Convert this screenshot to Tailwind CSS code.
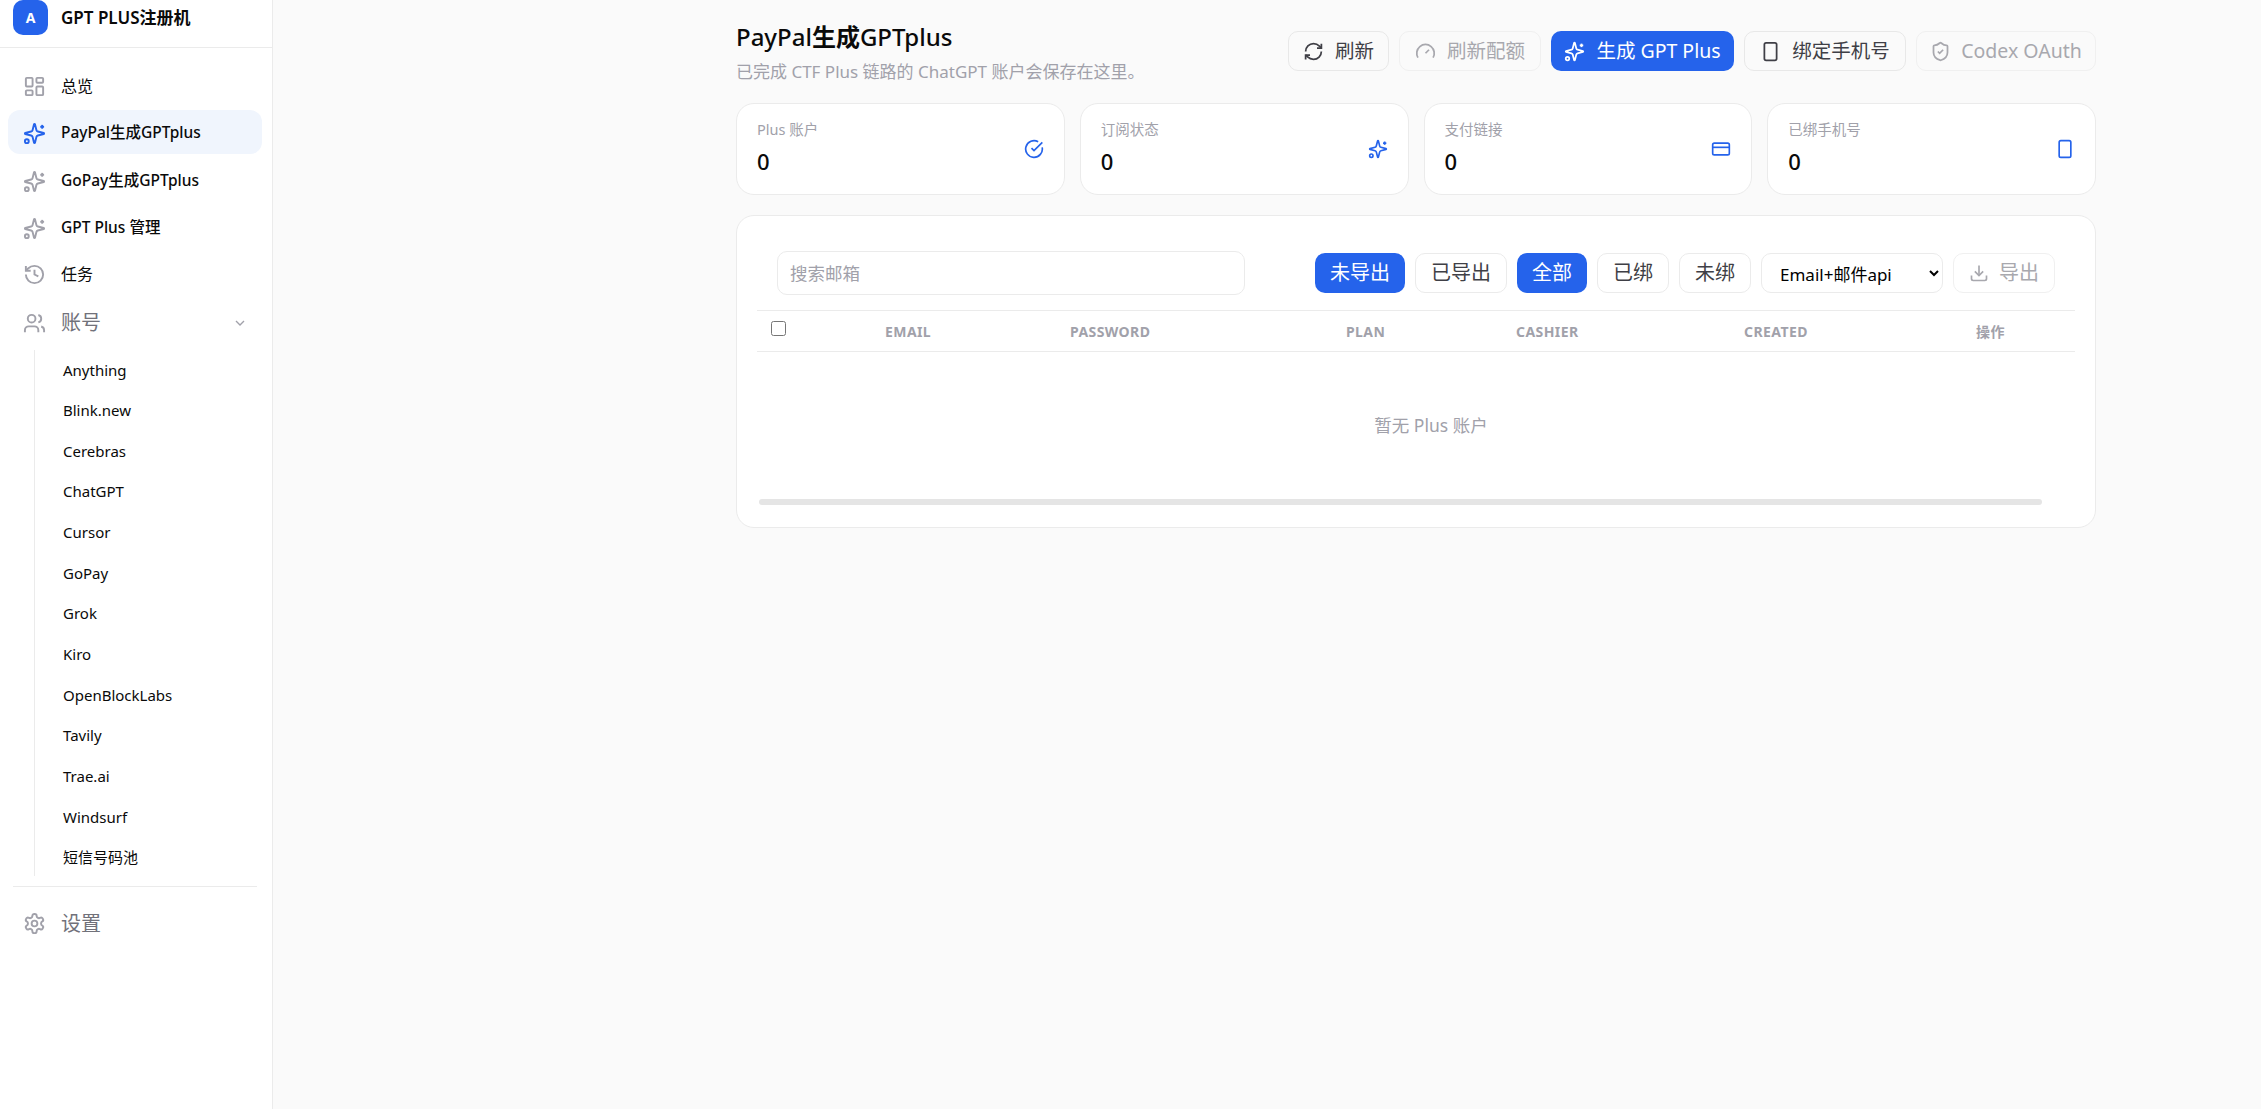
<!DOCTYPE html>
<html lang="zh-CN">
<head>
    <meta charset="UTF-8">
    <title>GPT PLUS注册机</title>
    <script src="https://cdn.jsdelivr.net/npm/@tailwindcss/browser@4"></script>
</head>
<body class="h-[1109px] overflow-hidden bg-[#fafafa] text-[#0a0a0a] font-['Noto_Sans','Noto_Sans_CJK_SC',sans-serif]">
    <svg class="hidden">
        <defs>
            <symbol id="i-dashboard" viewBox="0 0 24 24"><rect width="7" height="9" x="3" y="3" rx="1"/><rect width="7" height="5" x="14" y="3" rx="1"/><rect width="7" height="9" x="14" y="12" rx="1"/><rect width="7" height="5" x="3" y="16" rx="1"/></symbol>
            <symbol id="i-sparkles" viewBox="0 0 24 24"><path d="M9.937 15.5A2 2 0 0 0 8.5 14.063l-6.135-1.582a.5.5 0 0 1 0-.962L8.5 9.936A2 2 0 0 0 9.937 8.5l1.582-6.135a.5.5 0 0 1 .963 0L14.063 8.5A2 2 0 0 0 15.5 9.937l6.135 1.581a.5.5 0 0 1 0 .964L15.5 14.063a2 2 0 0 0-1.437 1.437l-1.582 6.135a.5.5 0 0 1-.963 0z"/><path d="M20 3v4"/><path d="M22 5h-4"/><circle cx="4" cy="20" r="2"/></symbol>
            <symbol id="i-history" viewBox="0 0 24 24"><path d="M3 12a9 9 0 1 0 9-9 9.75 9.75 0 0 0-6.74 2.74L3 8"/><path d="M3 3v5h5"/><path d="M12 7v5l4 2"/></symbol>
            <symbol id="i-users" viewBox="0 0 24 24"><path d="M16 21v-2a4 4 0 0 0-4-4H6a4 4 0 0 0-4 4v2"/><circle cx="9" cy="7" r="4"/><path d="M22 21v-2a4 4 0 0 0-3-3.87"/><path d="M16 3.13a4 4 0 0 1 0 7.75"/></symbol>
            <symbol id="i-chevron" viewBox="0 0 24 24"><path d="m6 9 6 6 6-6"/></symbol>
            <symbol id="i-settings" viewBox="0 0 24 24"><path d="M12.22 2h-.44a2 2 0 0 0-2 2v.18a2 2 0 0 1-1 1.73l-.43.25a2 2 0 0 1-2 0l-.15-.08a2 2 0 0 0-2.73.73l-.22.38a2 2 0 0 0 .73 2.73l.15.1a2 2 0 0 1 1 1.72v.51a2 2 0 0 1-1 1.74l-.15.09a2 2 0 0 0-.73 2.73l.22.38a2 2 0 0 0 2.73.73l.15-.08a2 2 0 0 1 2 0l.43.25a2 2 0 0 1 1 1.73V20a2 2 0 0 0 2 2h.44a2 2 0 0 0 2-2v-.18a2 2 0 0 1 1-1.73l.43-.25a2 2 0 0 1 2 0l.15.08a2 2 0 0 0 2.73-.73l.22-.39a2 2 0 0 0-.73-2.73l-.15-.08a2 2 0 0 1-1-1.74v-.5a2 2 0 0 1 1-1.74l.15-.09a2 2 0 0 0 .73-2.73l-.22-.38a2 2 0 0 0-2.73-.73l-.15.08a2 2 0 0 1-2 0l-.43-.25a2 2 0 0 1-1-1.73V4a2 2 0 0 0-2-2z"/><circle cx="12" cy="12" r="3"/></symbol>
            <symbol id="i-refresh" viewBox="0 0 24 24"><path d="M3 12a9 9 0 0 1 9-9 9.75 9.75 0 0 1 6.74 2.74L21 8"/><path d="M21 3v5h-5"/><path d="M21 12a9 9 0 0 1-9 9 9.75 9.75 0 0 1-6.74-2.74L3 16"/><path d="M8 16H3v5"/></symbol>
            <symbol id="i-gauge" viewBox="0 0 24 24"><path d="m12 14 4-4"/><path d="M3.34 19a10 10 0 1 1 17.32 0"/></symbol>
            <symbol id="i-phone" viewBox="0 0 24 24"><rect width="14" height="20" x="5" y="2" rx="2" ry="2"/><path d="M12 18h.01"/></symbol>
            <symbol id="i-shield" viewBox="0 0 24 24"><path d="M20 13c0 5-3.5 7.5-7.66 8.95a1 1 0 0 1-.67-.01C7.5 20.5 4 18 4 13V6a1 1 0 0 1 1-1c2 0 4.5-1.2 6.24-2.72a1.17 1.17 0 0 1 1.52 0C14.51 3.81 17 5 19 5a1 1 0 0 1 1 1z"/><path d="m9 12 2 2 4-4"/></symbol>
            <symbol id="i-check" viewBox="0 0 24 24"><path d="M21.801 10A10 10 0 1 1 17 3.335"/><path d="m9 11 3 3L22 4"/></symbol>
            <symbol id="i-card" viewBox="0 0 24 24"><rect width="20" height="14" x="2" y="5" rx="2"/><line x1="2" x2="22" y1="10" y2="10"/></symbol>
            <symbol id="i-download" viewBox="0 0 24 24"><path d="M21 15v4a2 2 0 0 1-2 2H5a2 2 0 0 1-2-2v-4"/><polyline points="7 10 12 15 17 10"/><line x1="12" x2="12" y1="15" y2="3"/></symbol>
        </defs>
    </svg>

    <div class="flex h-full">
        <!-- sidebar -->
        <aside class="w-[273px] shrink-0 h-full bg-white border-r border-[#ebebeb]">
            <div class="h-[48px] border-b border-[#ebebeb] pl-[13px] flex items-start gap-[13px]">
                <div class="w-[35px] h-[35px] rounded-[10px] bg-[#2563eb] text-white text-[14px] font-bold flex items-center justify-center">A</div>
                <div class="h-[35px] flex items-center text-[17px] font-semibold">GPT PLUS注册机</div>
            </div>
            <nav class="pt-[15px] pl-[8px] pr-[10px] text-[15.5px] font-medium">
                <a class="h-[47px] pl-[15px] pb-[1px] flex items-center gap-[15px] text-[16px] font-normal"><svg class="w-[23px] h-[23px] text-[#a1a1aa] fill-none stroke-current stroke-2"><use href="#i-dashboard"/></svg>总览</a>
                <a class="h-[44px] mb-[2.5px] pt-[2px] rounded-[12px] bg-[#f0f5fd] pl-[15px] flex items-center gap-[15px]"><svg class="w-[23px] h-[23px] text-[#2563eb] fill-none stroke-current stroke-2"><use href="#i-sparkles"/></svg>PayPal生成GPTplus</a>
                <a class="h-[47px] pt-[2px] pl-[15px] flex items-center gap-[15px]"><svg class="w-[23px] h-[23px] text-[#a1a1aa] fill-none stroke-current stroke-2"><use href="#i-sparkles"/></svg>GoPay生成GPTplus</a>
                <a class="h-[47px] pt-[2px] pl-[15px] flex items-center gap-[15px]"><svg class="w-[23px] h-[23px] text-[#a1a1aa] fill-none stroke-current stroke-2"><use href="#i-sparkles"/></svg>GPT Plus 管理</a>
                <a class="h-[47px] pl-[15px] flex items-center gap-[15px] text-[16px] font-normal"><svg class="w-[23px] h-[23px] text-[#a1a1aa] fill-none stroke-current stroke-2"><use href="#i-history"/></svg>任务</a>
                <a class="h-[49px] pt-[2px] pl-[15px] pr-[14px] flex items-center gap-[15px] text-[20px] font-normal text-[#71717a]"><svg class="w-[23px] h-[23px] text-[#a1a1aa] fill-none stroke-current stroke-2"><use href="#i-users"/></svg>账号<svg class="ml-auto w-[16px] h-[16px] text-[#a1a1aa] fill-none stroke-current stroke-2"><use href="#i-chevron"/></svg></a>
            </nav>
            <ul class="ml-[34px] mt-[3px] h-[526px] border-l border-[#ebebeb] pl-[28px] text-[15px]">
                <li class="h-[40.65px] flex items-center">Anything</li>
                <li class="h-[40.65px] flex items-center">Blink.new</li>
                <li class="h-[40.65px] flex items-center">Cerebras</li>
                <li class="h-[40.65px] flex items-center">ChatGPT</li>
                <li class="h-[40.65px] flex items-center">Cursor</li>
                <li class="h-[40.65px] flex items-center">GoPay</li>
                <li class="h-[40.65px] flex items-center">Grok</li>
                <li class="h-[40.65px] flex items-center">Kiro</li>
                <li class="h-[40.65px] flex items-center">OpenBlockLabs</li>
                <li class="h-[40.65px] flex items-center">Tavily</li>
                <li class="h-[40.65px] flex items-center">Trae.ai</li>
                <li class="h-[40.65px] flex items-center">Windsurf</li>
                <li class="h-[40.65px] flex items-center">短信号码池</li>
            </ul>
            <div class="mx-[13px] mt-[10px] w-[244px] border-t border-[#ebebeb]"></div>
            <a class="h-[74px] pl-[23px] flex items-center gap-[15px] text-[20px] text-[#71717a]"><svg class="w-[23px] h-[23px] text-[#a1a1aa] fill-none stroke-current stroke-2"><use href="#i-settings"/></svg>设置</a>
        </aside>

        <!-- content -->
        <main class="flex-1 pl-[463px] pr-[165px]">
            <header class="h-[103px] flex justify-between">
                <div class="pt-[21px]">
                    <h1 class="text-[24px] leading-[32px] font-medium">PayPal<span class="font-bold">生成</span>GPTplus</h1>
                    <p class="mt-[7px] text-[17px] leading-[24px] text-[#a1a1aa]">已完成 CTF Plus 链路的 ChatGPT 账户会保存在这里。</p>
                </div>
                <div class="pt-[31px] flex gap-[10px] text-[19.5px]">
                    <button class="h-[40px] w-[101px] rounded-[10px] border border-[#e8e8e8] bg-[#fafafa] text-[#3f3f46] flex items-center justify-center gap-[11px]"><svg class="w-[21px] h-[21px] fill-none stroke-current stroke-2"><use href="#i-refresh"/></svg>刷新</button>
                    <button class="h-[40px] w-[142px] rounded-[10px] border border-[#f0f0f0] bg-[#fafafa] text-[#a8a8ae] flex items-center justify-center gap-[11px]"><svg class="w-[21px] h-[21px] fill-none stroke-current stroke-2"><use href="#i-gauge"/></svg>刷新配额</button>
                    <button class="h-[40px] w-[183px] rounded-[10px] bg-[#2563eb] text-white flex items-center justify-center gap-[11px]"><svg class="w-[21px] h-[21px] fill-none stroke-current stroke-2"><use href="#i-sparkles"/></svg>生成 GPT Plus</button>
                    <button class="h-[40px] w-[162px] rounded-[10px] border border-[#e8e8e8] bg-[#fafafa] text-[#3f3f46] flex items-center justify-center gap-[11px]"><svg class="w-[21px] h-[21px] fill-none stroke-current stroke-2"><use href="#i-phone"/></svg>绑定手机号</button>
                    <button class="h-[40px] w-[180px] rounded-[10px] border border-[#f0f0f0] bg-[#fafafa] text-[#a8a8ae] flex items-center justify-center gap-[10px]"><svg class="w-[21px] h-[21px] fill-none stroke-current stroke-2"><use href="#i-shield"/></svg>Codex OAuth</button>
                </div>
            </header>

            <section class="grid grid-cols-4 gap-[15px]">
                <div class="h-[92px] rounded-[18px] border border-[#ebebeb] bg-white px-[20px] pt-[15px] flex items-start justify-between">
                    <div><div class="text-[14.5px] leading-[20px] text-[#a1a1aa]">Plus 账户</div><div class="mt-[7px] text-[22px] leading-[30px] font-medium">0</div></div>
                    <svg class="mt-[20px] w-[20px] h-[20px] text-[#2563eb] fill-none stroke-current stroke-2"><use href="#i-check"/></svg>
                </div>
                <div class="h-[92px] rounded-[18px] border border-[#ebebeb] bg-white px-[20px] pt-[15px] flex items-start justify-between">
                    <div><div class="text-[14.5px] leading-[20px] text-[#a1a1aa]">订阅状态</div><div class="mt-[7px] text-[22px] leading-[30px] font-medium">0</div></div>
                    <svg class="mt-[20px] w-[20px] h-[20px] text-[#2563eb] fill-none stroke-current stroke-2"><use href="#i-sparkles"/></svg>
                </div>
                <div class="h-[92px] rounded-[18px] border border-[#ebebeb] bg-white px-[20px] pt-[15px] flex items-start justify-between">
                    <div><div class="text-[14.5px] leading-[20px] text-[#a1a1aa]">支付链接</div><div class="mt-[7px] text-[22px] leading-[30px] font-medium">0</div></div>
                    <svg class="mt-[20px] w-[20px] h-[20px] text-[#2563eb] fill-none stroke-current stroke-2"><use href="#i-card"/></svg>
                </div>
                <div class="h-[92px] rounded-[18px] border border-[#ebebeb] bg-white px-[20px] pt-[15px] flex items-start justify-between">
                    <div><div class="text-[14.5px] leading-[20px] text-[#a1a1aa]">已绑手机号</div><div class="mt-[7px] text-[22px] leading-[30px] font-medium">0</div></div>
                    <svg class="mt-[20px] w-[20px] h-[20px] text-[#2563eb] fill-none stroke-current stroke-2"><use href="#i-phone"/></svg>
                </div>
            </section>

            <section class="mt-[20px] h-[313px] rounded-[18px] border border-[#ebebeb] bg-white px-[20px] pt-[35px]">
                <div class="h-[44px] pl-[20px] pr-[20px] flex items-center justify-between">
                    <input placeholder="搜索邮箱" class="w-[468px] h-[44px] rounded-[10px] border border-[#ebebeb] px-[12px] text-[17.5px] placeholder:text-[#a1a1aa] outline-none">
                    <div class="flex items-center gap-[10px] text-[20px]">
                        <button class="w-[90px] h-[40px] rounded-[10px] bg-[#2563eb] text-white">未导出</button>
                        <button class="w-[92px] h-[40px] rounded-[10px] border border-[#ebebeb] text-[#3f3f46]">已导出</button>
                        <button class="w-[70px] h-[40px] rounded-[10px] bg-[#2563eb] text-white">全部</button>
                        <button class="w-[72px] h-[40px] rounded-[10px] border border-[#ebebeb] text-[#3f3f46]">已绑</button>
                        <button class="w-[72px] h-[40px] rounded-[10px] border border-[#ebebeb] text-[#3f3f46]">未绑</button>
                        <select class="w-[182px] h-[40px] rounded-[10px] border border-[#ebebeb] bg-white px-[14px] pt-[2px] text-[17px] text-black"><option>Email+邮件api</option></select>
                        <button class="w-[102px] h-[40px] rounded-[10px] border border-[#f0f0f0] text-[#a8a8ae] flex items-center justify-center gap-[10px]"><svg class="w-[20px] h-[20px] fill-none stroke-current stroke-2"><use href="#i-download"/></svg>导出</button>
                    </div>
                </div>
                <div class="mt-[15px] h-[42px] border-y border-[#ebebeb] grid grid-cols-[128px_185px_276px_170px_228px_232px_1fr] text-[14px] font-bold text-[#a1a1aa] tracking-[0.03em]">
                    <div class="pl-[14px] pt-[10px]"><input type="checkbox" class="block w-[15px] h-[15px]"></div>
                    <div class="flex items-center pt-[1px]">EMAIL</div>
                    <div class="flex items-center pt-[1px]">PASSWORD</div>
                    <div class="flex items-center pt-[1px]">PLAN</div>
                    <div class="flex items-center pt-[1px]">CASHIER</div>
                    <div class="flex items-center pt-[1px]">CREATED</div>
                    <div class="flex items-center pt-[1px]">操作</div>
                </div>
                <div class="h-[147px] pl-[30px] flex items-center justify-center text-[17.5px] text-[#a1a1aa]">暂无 Plus 账户</div>
                <div class="ml-[2px] w-[1283px] h-[6px] rounded-full bg-[#e5e5e5]"></div>
            </section>
        </main>
    </div>
</body>
</html>
